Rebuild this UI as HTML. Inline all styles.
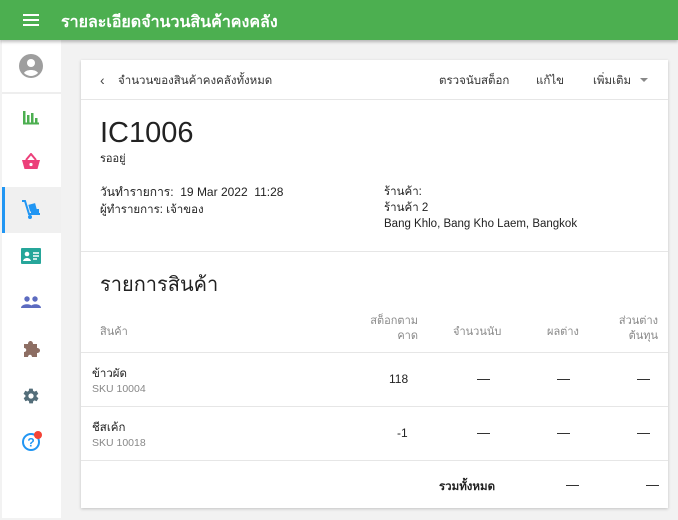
<!DOCTYPE html>
<html><head><meta charset="utf-8"><style>
*{margin:0;padding:0;box-sizing:border-box}
body{width:678px;height:520px;overflow:hidden;background:#f2f2f2;font-family:"Liberation Sans","Noto Sans CJK SC",sans-serif;color:#222;position:relative}
.a{position:absolute;white-space:nowrap}
.hdr{left:0;top:0;width:678px;height:40px;background:#4caf50;box-shadow:0 2px 3px rgba(0,0,0,.25);z-index:2}
.side{left:2px;top:40px;width:59px;height:478px;background:#fff}
.card{left:81px;top:60px;width:587px;height:448px;background:#fff;box-shadow:0 1px 3px rgba(0,0,0,.2)}
.ln{position:absolute;left:0;width:100%;height:1px;background:#e6e6e6}
.ic{position:absolute;left:20px}
.dash{position:absolute;width:13px;height:1px;background:#333}
</style></head><body>
<div class="a hdr">
<div class="a" style="left:23px;top:14px;width:16px;height:2px;background:#fff;box-shadow:0 5px 0 #fff,0 10px 0 #fff"></div>
<div class="a" style="left:61px;top:10px;color:#fff;font-size:16px;font-weight:bold">รายละเอียดจำนวนสินค้าคงคลัง</div>
</div>
<div class="a side">
<div style="position:absolute;left:0;top:52px;width:59px;height:2px;background:#eee"></div>
<svg class="ic" style="left:17px;top:14px" width="24" height="24" viewBox="0 0 24 24"><circle cx="12" cy="12" r="12" fill="#9e9e9e"/><circle cx="12" cy="9" r="4" fill="#fff"/><path d="M5 19c2-4 12-4 14 0c-2 2-5 3-7 3s-5-1-7-3z" fill="#fff"/></svg>
<svg class="ic" style="left:20px;top:69px" width="18" height="16" viewBox="0 0 18 16"><path d="M1 2h2.5v12h-2.5zM5 6h2.5v8h-2.5zM9 4h2.5v10h-2.5zM13 9h2.5v5h-2.5zM1 13.5h16v2h-16z" fill="#4caf50"/></svg>
<svg class="ic" style="left:19px;top:113px" width="20" height="18" viewBox="0 0 20 18"><path d="M1 7h18l-2.5 9h-13z" fill="#ec407a"/><path d="M5 7l5-6l5 6" stroke="#ec407a" stroke-width="2" fill="none"/><circle cx="10" cy="11.5" r="1.6" fill="#fff"/></svg>
<div style="position:absolute;left:0;top:147px;width:59px;height:46px;background:#f0f0f0;border-left:3px solid #2196f3"></div>
<svg class="ic" style="left:19px;top:159px" width="22" height="22" viewBox="0 0 22 22"><path d="M1 2h3l4 13h11" stroke="#2196f3" stroke-width="2" fill="none"/><rect x="8" y="5" width="7" height="7" fill="#2196f3" transform="rotate(-15 11 8)"/><rect x="10" y="10" width="8" height="4" fill="#2196f3"/><circle cx="9" cy="18" r="2" fill="#2196f3"/></svg>
<svg class="ic" style="left:19px;top:208px" width="20" height="16" viewBox="0 0 20 16"><rect width="20" height="16" rx="1" fill="#26a69a"/><circle cx="6" cy="6" r="2.3" fill="#fff"/><path d="M2 13c1-4 7-4 8 0z" fill="#fff"/><path d="M12 5h6M12 8h6M12 11h4" stroke="#fff" stroke-width="1.5"/></svg>
<svg class="ic" style="left:19px;top:256px" width="20" height="12" viewBox="0 0 20 12"><circle cx="6" cy="3" r="2.7" fill="#5c6bc0"/><circle cx="14" cy="3" r="2.7" fill="#5c6bc0"/><path d="M0 12c0-5 12-5 12 0zM9 12c0-5 11-5 11 0z" fill="#5c6bc0"/></svg>
<svg class="ic" style="left:20px;top:299px" width="18" height="19" viewBox="0 0 18 19"><path d="M2 5h4c0-4 5-4 5 0h4v4c4 0 4 5 0 5v4h-5c0-3-4-3-4 0h-4v-5c3 0 3-4 0-4z" fill="#8d6e63"/></svg>
<svg class="ic" style="left:20px;top:347px" width="18" height="18" viewBox="0 0 24 24"><path fill="#546e7a" d="M19.4 13c.1-.3.1-.7.1-1s0-.7-.1-1l2.1-1.6c.2-.2.2-.4.1-.6l-2-3.5c-.1-.2-.4-.3-.6-.2l-2.5 1c-.5-.4-1.1-.7-1.700-1l-.4-2.6c0-.2-.2-.4-.5-.4h-4c-.2 0-.5.2-.5.4l-.4 2.6c-.6.3-1.200.6-1.700 1l-2.500-1c-.2-.1-.5 0-.6.2l-2 3.5c-.1.2-.1.5.1.6L4.6 11c0 .3-.1.7-.1 1s0 .7.1 1l-2.1 1.6c-.2.2-.2.4-.1.6l2 3.5c.1.2.4.3.6.2l2.5-1c.5.4 1.1.7 1.7 1l.4 2.6c0 .2.2.4.5.4h4c.2 0 .5-.2.5-.4l.4-2.6c.6-.3 1.2-.6 1.7-1l2.5 1c.2.1.5 0 .6-.2l2-3.5c.1-.2.1-.5-.1-.6zM12 15.5a3.5 3.5 0 1 1 0-7a3.5 3.5 0 0 1 0 7z"/></svg>
<svg class="ic" style="left:19px;top:390px" width="22" height="22" viewBox="0 0 22 22"><circle cx="10" cy="12" r="8" fill="none" stroke="#2196f3" stroke-width="2"/><text x="10" y="16.5" font-size="12" font-weight="bold" text-anchor="middle" fill="#2196f3" font-family="Liberation Sans">?</text><circle cx="17" cy="5" r="4" fill="#f44336"/></svg>
</div>
<div class="a card">
<div class="a" style="left:19px;top:12px;font-size:14px;color:#444">‹</div>
<div class="a" style="left:37px;top:12px;font-size:11.5px;color:#333">จำนวนของสินค้าคงคลังทั้งหมด</div>
<div class="a" style="left:358px;top:12px;font-size:11.5px;color:#333">ตรวจนับสต็อก</div>
<div class="a" style="left:455px;top:12px;font-size:11.5px;color:#333">แก้ไข</div>
<div class="a" style="left:512px;top:12px;font-size:11.5px;color:#333">เพิ่มเติม</div>
<div class="a" style="left:559px;top:18px;width:0;height:0;border-left:4px solid transparent;border-right:4px solid transparent;border-top:4px solid #888"></div>
<div class="ln" style="top:39px"></div>
<div class="a" style="left:19px;top:57px;font-size:29px;color:#222">IC1006</div>
<div class="a" style="left:19px;top:89px;font-size:11px">รออยู่</div>
<div class="a" style="left:19px;top:123px;font-size:12px">วันทำรายการ: &nbsp;19 Mar 2022 &nbsp;11:28</div>
<div class="a" style="left:19px;top:141px;font-size:11.5px">ผู้ทำรายการ: เจ้าของ</div>
<div class="a" style="left:303px;top:124px;font-size:11.5px;line-height:16px">ร้านค้า:<br>ร้านค้า 2<br>Bang Khlo, Bang Kho Laem, Bangkok</div>
<div class="ln" style="top:191px"></div>
<div class="a" style="left:19px;top:208px;font-size:20px">รายการสินค้า</div>
<div class="a" style="left:19px;top:262px;font-size:11px;color:#888">สินค้า</div>
<div class="a" style="left:280px;top:254px;font-size:11px;color:#888;text-align:right;line-height:15px;width:57px">สต็อกตาม<br>คาด</div>
<div class="a" style="left:372px;top:262px;font-size:11px;color:#888">จำนวนนับ</div>
<div class="a" style="left:466px;top:262px;font-size:11px;color:#888">ผลต่าง</div>
<div class="a" style="left:520px;top:254px;font-size:11px;color:#888;text-align:right;line-height:15px;width:57px">ส่วนต่าง<br>ต้นทุน</div>
<div class="ln" style="top:292px"></div>
<div class="a" style="left:11px;top:305px;font-size:11.5px">ข้าวผัด</div>
<div class="a" style="left:11px;top:323px;font-size:10.5px;color:#888">SKU 10004</div>
<div class="a" style="left:308px;top:312px;font-size:12px">118</div>
<div class="dash" style="left:396px;top:319px"></div><div class="dash" style="left:476px;top:319px"></div><div class="dash" style="left:556px;top:319px"></div>
<div class="ln" style="top:346px"></div>
<div class="a" style="left:11px;top:359px;font-size:11.5px">ชีสเค้ก</div>
<div class="a" style="left:11px;top:377px;font-size:10.5px;color:#888">SKU 10018</div>
<div class="a" style="left:316px;top:366px;font-size:12px">-1</div>
<div class="dash" style="left:396px;top:373px"></div><div class="dash" style="left:476px;top:373px"></div><div class="dash" style="left:556px;top:373px"></div>
<div class="ln" style="top:400px"></div>
<div class="a" style="left:358px;top:418px;font-size:11.5px;font-weight:bold">รวมทั้งหมด</div>
<div class="dash" style="left:485px;top:425px"></div><div class="dash" style="left:565px;top:425px"></div>
</div>
</body></html>
